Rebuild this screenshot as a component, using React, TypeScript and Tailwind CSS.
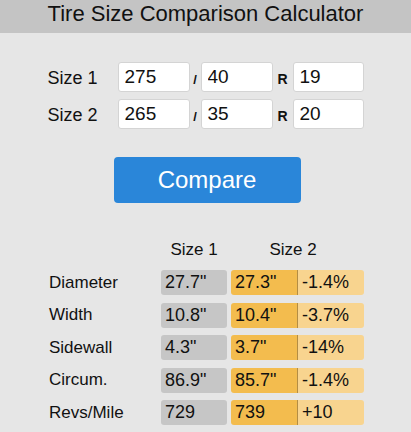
import React from 'react';

// Tire size comparison calculator

interface SizeRow {
  label: string;
  width: string;
  aspect: string;
  rim: string;
}

interface ResultRow {
  label: string;
  size1: string;
  size2: string;
  diff: string;
}

const SIZES: SizeRow[] = [
  { label: 'Size 1', width: '275', aspect: '40', rim: '19' },
  { label: 'Size 2', width: '265', aspect: '35', rim: '20' },
];

const RESULTS: ResultRow[] = [
  { label: 'Diameter', size1: '27.7"', size2: '27.3"', diff: '-1.4%' },
  { label: 'Width', size1: '10.8"', size2: '10.4"', diff: '-3.7%' },
  { label: 'Sidewall', size1: '4.3"', size2: '3.7"', diff: '-14%' },
  { label: 'Circum.', size1: '86.9"', size2: '85.7"', diff: '-1.4%' },
  { label: 'Revs/Mile', size1: '729', size2: '739', diff: '+10' },
];

const inputClass =
  'h-[30px] rounded-[3px] border border-[#d4d4d4] bg-white pl-[6px] text-[19px] text-[#111] outline-none';

export default function App() {
  return (
    <div className="min-h-screen bg-[#e6e6e6] font-['Liberation_Sans',Arial,sans-serif] text-[#111]">
      {/* Titulo */}
      <div className="h-[33px] bg-[#c4c4c4] text-center text-[22px] leading-[28px]">
        Tire Size Comparison Calculator
      </div>

      {/* Entradas */}
      <div className="mx-auto mt-[29px] flex w-[316px] flex-col gap-[7px]">
        {SIZES.map((s) => (
          <div key={s.label} className="flex h-[30px] items-center">
            <span className="w-[70px] pt-[2px] text-[18px]">{s.label}</span>
            <input className={`${inputClass} w-[72px]`} defaultValue={s.width} />
            <span className="w-[11px] pt-[5px] text-center text-[13px] font-bold">/</span>
            <input className={`${inputClass} w-[72px]`} defaultValue={s.aspect} />
            <span className="w-[20px] pt-[5px] text-center text-[14px] font-bold">R</span>
            <input className={`${inputClass} w-[71px]`} defaultValue={s.rim} />
          </div>
        ))}
      </div>

      {/* Boton */}
      <div className="mt-[28px] flex justify-center">
        <button className="ml-[3px] h-[46px] w-[187px] rounded-[4px] bg-[#2a86d9] text-[24px] text-white">
          Compare
        </button>
      </div>

      {/* Resultados */}
      <div className="mx-auto mt-[34.5px] flex w-[317px] flex-col gap-[7.5px]">
        <div className="flex h-[25px] items-center text-[17px]">
          <span className="w-[114px]" />
          <span className="w-[66px] text-center">Size 1</span>
          <span className="ml-[4px] w-[133px] pr-[9px] text-center">Size 2</span>
        </div>
        {RESULTS.map((r) => (
          <div key={r.label} className="flex h-[25px] items-stretch">
            <span className="flex w-[114px] items-center pl-[2px] text-[17px]">{r.label}</span>
            <span className="flex w-[66px] items-center rounded-[3px] bg-[#c6c6c6] pl-[4px] text-[18px]">
              {r.size1}
            </span>
            <span className="ml-[4px] flex w-[66px] items-center rounded-l-[3px] bg-[#f3bc4e] pl-[4px] text-[18px]">
              {r.size2}
            </span>
            <span className="w-[1px] bg-[#b38d44]" />
            <span className="flex w-[66px] items-center rounded-r-[3px] bg-[#f8d48f] pl-[4px] text-[18px]">
              {r.diff}
            </span>
          </div>
        ))}
      </div>
    </div>
  );
}
